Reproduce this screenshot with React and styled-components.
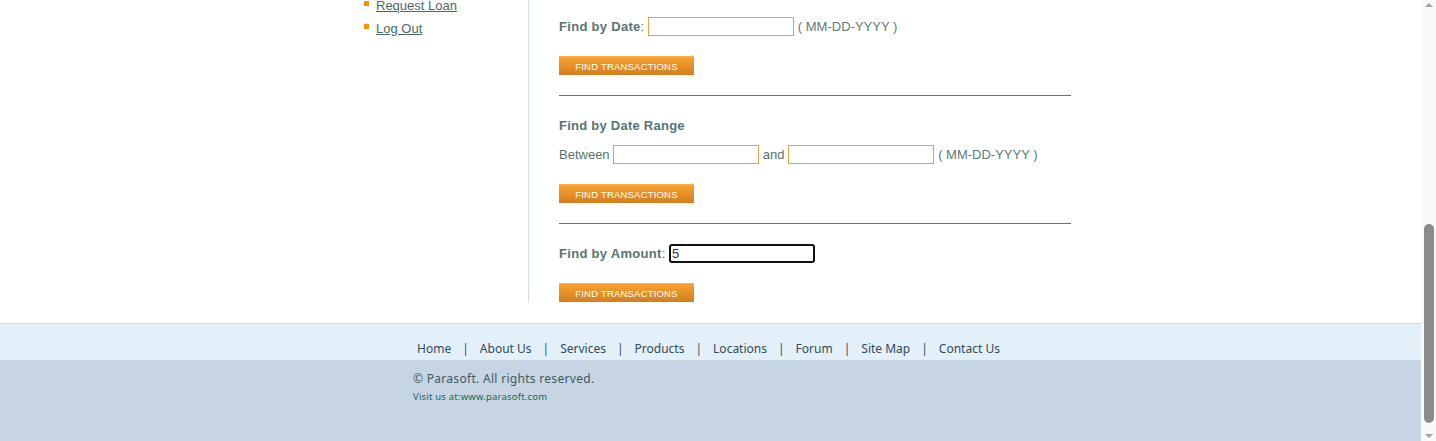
import React from "react";
import styled, { createGlobalStyle } from "styled-components";

const GlobalStyle = createGlobalStyle`
  html, body {
    margin: 0;
    padding: 0;
    background: #ffffff;
    overflow: hidden;
  }
  body {
    font-family: "Liberation Sans", Arial, Helvetica, sans-serif;
    font-size: 13px;
    color: #5a7371;
  }
  * { box-sizing: border-box; }
`;

/* ---------- window frame: page view + scrollbar ---------- */
const Screen = styled.div`
  display: flex;
  height: 441px;
  overflow: hidden;
`;

const Viewport = styled.div`
  flex: 1;
  min-width: 0;
  display: flex;
  flex-direction: column;
  overflow: hidden;
`;

const Scrollbar = styled.div`
  width: 15px;
  flex: none;
  display: flex;
  flex-direction: column;
  align-items: center;
  background: #f9f9f9;
`;

const ArrowBox = styled.div`
  height: 15px;
  width: 15px;
  display: flex;
  align-items: center;
  justify-content: center;
  &::before {
    content: "";
    width: 0;
    height: 0;
    border-left: 4px solid transparent;
    border-right: 4px solid transparent;
    ${(p) =>
      p.$down
        ? "border-top: 4px solid #a3a3a3; margin-top: 4px;"
        : "border-bottom: 4px solid #a3a3a3; margin-top: -6px;"}
  }
`;

const Track = styled.div`
  flex: 1;
  width: 100%;
  display: flex;
  flex-direction: column;
  justify-content: flex-end;
  align-items: center;
  padding-bottom: 3px;
`;

const Thumb = styled.div`
  width: 10px;
  height: 199px;
  border-radius: 5px;
  background: #8b8b8b;
`;

/* ---------- body ---------- */
const BodyPanel = styled.main`
  width: 721px;
  margin: 0 auto;
  display: flex;
  align-items: stretch;
`;

const LeftPanel = styled.aside`
  width: 179px;
  flex: none;
  border-right: 1px solid #c7e6e0;
  padding-left: 14px;
`;

const Menu = styled.ul`
  list-style: none;
  margin: -6px 0 0;
  padding: 0;
`;

const MenuItem = styled.li`
  display: flex;
  align-items: flex-start;
  gap: 7px;
  height: 23px;
  line-height: 23px;
  &::before {
    content: "";
    flex: none;
    width: 5px;
    height: 5px;
    margin-top: 7px;
    background: #f0920f;
  }
`;

const MenuLink = styled.a`
  color: #4d6866;
  text-decoration: underline;
  font-size: 13px;
`;

const RightPanel = styled.section`
  flex: 1;
  padding-left: 30px;
  display: flex;
  flex-direction: column;
`;

const Section = styled.div`
  display: flex;
  flex-direction: column;
  align-items: flex-start;
  padding-top: ${(p) => (p.$first ? "17px" : "20px")};
  padding-bottom: ${(p) => (p.$last ? "0" : "20px")};
  border-bottom: ${(p) => (p.$last ? "none" : "1px solid #5e7977")};
`;

const SectionHeading = styled.div`
  height: 19px;
  line-height: 19px;
  font-weight: bold;
  letter-spacing: 0.25px;
  margin-bottom: 10px;
`;

const FormRow = styled.div`
  display: flex;
  align-items: center;
  height: 19px;
  white-space: pre;
  color: #5a7371;
`;

const Label = styled.b`
  font-weight: bold;
  letter-spacing: 0.3px;
`;

const Hint = styled.span`
  margin-left: 4px;
  color: #627a78;
`;

const TextInput = styled.input`
  width: 146px;
  height: 19px;
  padding: 0 2px;
  margin: 0;
  border: 1px solid #e99f48;
  border-radius: 0;
  background: #fff;
  font-family: "Liberation Sans", Arial, sans-serif;
  font-size: 13px;
  color: #333;
  outline: none;
  ${(p) =>
    p.$focused &&
    `
    border: 2px solid #121212;
    border-radius: 3px;
    padding: 0 1px;
  `}
`;

const FindButton = styled.button`
  width: 135px;
  height: 19px;
  margin-top: 20px;
  padding: 0;
  border: none;
  border-top: 1px solid #fbb24e;
  background: linear-gradient(#f8a22f, #d27e20);
  color: #ffffff;
  font-family: "Liberation Sans", Arial, sans-serif;
  font-size: 9.5px;
  letter-spacing: 0.2px;
  text-transform: uppercase;
  line-height: 17px;
  cursor: pointer;
`;

/* ---------- footer ---------- */
const Footer = styled.footer`
  margin-top: 21px;
  flex: 1;
  display: flex;
  flex-direction: column;
  border-top: 1px solid #c9d5e2;
  font-family: "Noto Sans", "Liberation Sans", sans-serif;
`;

const LinksBand = styled.div`
  height: 36px;
  flex: none;
  background: #e3f0fa;
  display: flex;
  justify-content: center;
  align-items: flex-start;
  padding-top: 17px;
  padding-right: 4px;
`;

const FooterList = styled.ul`
  list-style: none;
  margin: 0;
  padding: 0;
  display: flex;
  font-size: 12px;
  line-height: 16px;
`;

const FooterItem = styled.li`
  display: flex;
  &:not(:last-child)::after {
    content: "|";
    margin: 0 11px;
    color: #314c56;
  }
`;

const FooterLink = styled.a`
  color: #314c56;
  text-decoration: none;
`;

const CopyBand = styled.div`
  flex: 1;
  background: #c6d4e3;
  padding-top: 11px;
`;

const CopyInner = styled.div`
  width: 595px;
  margin: 0 auto;
  display: flex;
  flex-direction: column;
  align-items: flex-start;
  gap: 3px;
`;

const Copyright = styled.p`
  margin: 0;
  font-size: 12px;
  line-height: 16px;
  letter-spacing: 0.3px;
  color: #3f5a62;
`;

const Visit = styled.a`
  font-size: 9.5px;
  line-height: 13px;
  letter-spacing: 0.2px;
  color: #0c6d5b;
  text-decoration: none;
`;

const menu = ["Request Loan", "Log Out"];

const footerLinks = [
  "Home",
  "About Us",
  "Services",
  "Products",
  "Locations",
  "Forum",
  "Site Map",
  "Contact Us",
];

export default function App() {
  return (
    <Screen>
      <GlobalStyle />
      <Viewport>
        <BodyPanel>
          <LeftPanel>
            <Menu>
              {menu.map((m) => (
                <MenuItem key={m}>
                  <MenuLink href="#">{m}</MenuLink>
                </MenuItem>
              ))}
            </Menu>
          </LeftPanel>

          <RightPanel>
            <Section $first>
              <FormRow>
                <Label>Find by Date</Label>: <TextInput type="text" />
                <Hint>( MM-DD-YYYY )</Hint>
              </FormRow>
              <FindButton>Find Transactions</FindButton>
            </Section>

            <Section>
              <SectionHeading>Find by Date Range</SectionHeading>
              <FormRow>
                Between <TextInput type="text" /> and <TextInput type="text" />
                <Hint>( MM-DD-YYYY )</Hint>
              </FormRow>
              <FindButton>Find Transactions</FindButton>
            </Section>

            <Section $last>
              <FormRow>
                <Label>Find by Amount</Label>:{" "}
                <TextInput type="text" $focused defaultValue="5" />
              </FormRow>
              <FindButton>Find Transactions</FindButton>
            </Section>
          </RightPanel>
        </BodyPanel>

        <Footer>
          <LinksBand>
            <FooterList>
              {footerLinks.map((l) => (
                <FooterItem key={l}>
                  <FooterLink href="#">{l}</FooterLink>
                </FooterItem>
              ))}
            </FooterList>
          </LinksBand>
          <CopyBand>
            <CopyInner>
              <Copyright>© Parasoft. All rights reserved.</Copyright>
              <Visit href="#">Visit us at:www.parasoft.com</Visit>
            </CopyInner>
          </CopyBand>
        </Footer>
      </Viewport>

      <Scrollbar>
        <ArrowBox />
        <Track>
          <Thumb />
        </Track>
        <ArrowBox $down />
      </Scrollbar>
    </Screen>
  );
}
